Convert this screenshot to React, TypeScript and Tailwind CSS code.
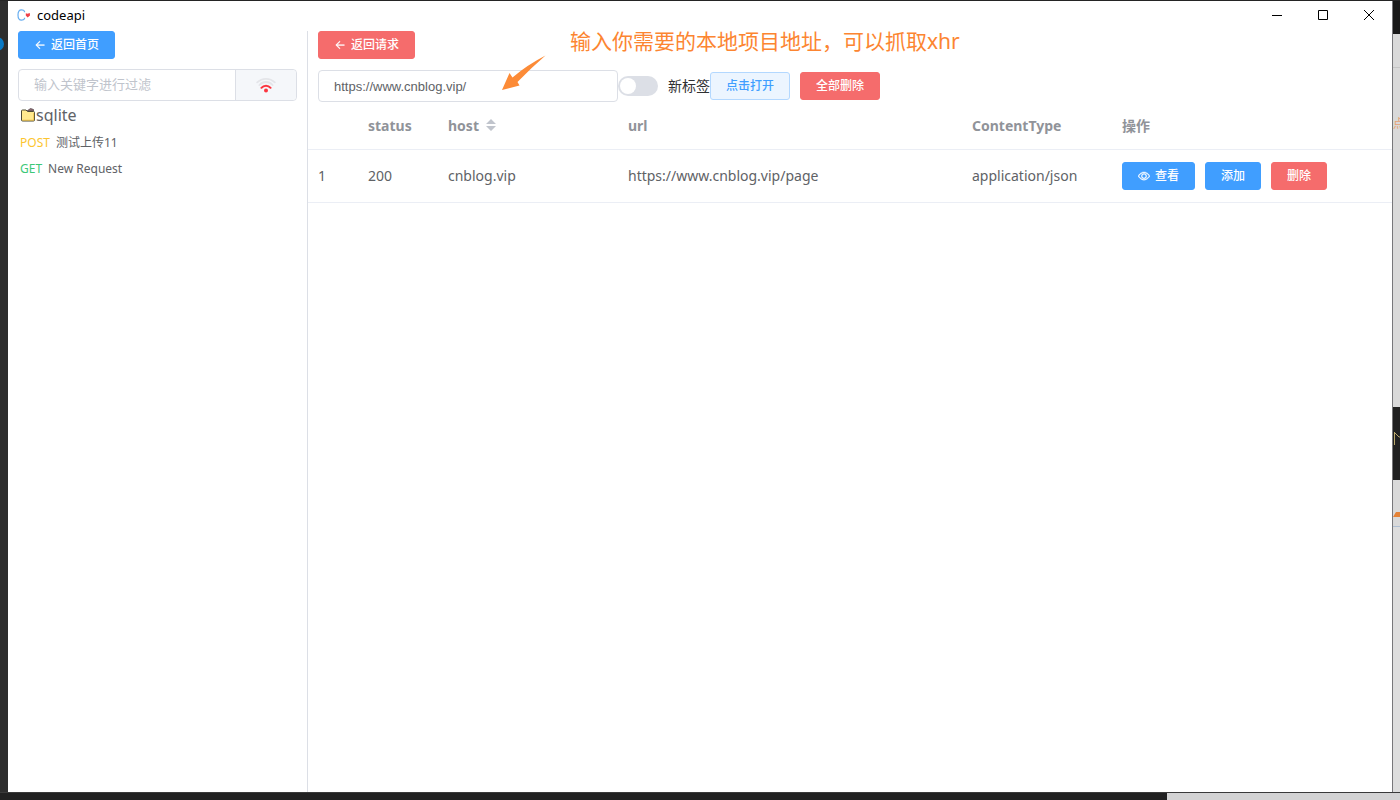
import { useState } from "react";
import type { ReactNode } from "react";

type Tone = "primary" | "danger" | "plain";

const tones: Record<Tone, string> = {
  primary: "border-[#409eff] bg-[#409eff] text-white",
  danger: "border-[#f56c6c] bg-[#f56c6c] text-white",
  plain: "border-[#b3d8ff] bg-[#ecf5ff] text-[#409eff]",
};

function Button({ tone, icon, children }: { tone: Tone; icon?: ReactNode; children: ReactNode }) {
  return (
    <button
      type="button"
      className={`flex h-7 shrink-0 items-center gap-[5px] rounded-[3px] border px-[15px] text-[12px] leading-3 font-medium ${tones[tone]}`}
    >
      {icon}
      <span>{children}</span>
    </button>
  );
}

function BackIcon() {
  return (
    <svg className="size-3" viewBox="0 0 1024 1024" fill="currentColor" stroke="currentColor" strokeWidth="40" aria-hidden="true">
      <path d="M224 480h640a32 32 0 1 1 0 64H224a32 32 0 0 1 0-64" />
      <path d="m237.248 512 265.408 265.344a32 32 0 0 1-45.312 45.312l-288-288a32 32 0 0 1 0-45.312l288-288a32 32 0 1 1 45.312 45.312z" />
    </svg>
  );
}

function ViewIcon() {
  return (
    <svg className="size-3" viewBox="0 0 1024 1024" fill="currentColor" stroke="currentColor" strokeWidth="30" aria-hidden="true">
      <path d="M512 160c320 0 512 352 512 352S832 864 512 864 0 512 0 512s192-352 512-352m0 64c-225.28 0-384.128 208.064-436.8 288 52.608 79.872 211.456 288 436.8 288 225.28 0 384.128-208.064 436.8-288-52.608-79.872-211.456-288-436.8-288m0 64a224 224 0 1 1 0 448 224 224 0 0 1 0-448m0 64a160.192 160.192 0 0 0-160 160c0 88.192 71.744 160 160 160s160-71.808 160-160-71.744-160-160-160" />
    </svg>
  );
}

function WifiIcon() {
  return (
    <svg className="h-4 w-5" viewBox="0 0 20 16" fill="none" strokeLinecap="round" aria-hidden="true">
      <path d="M1.200 5.400C6 .6 14 .6 18.800 5.400" stroke="#e4e5e9" strokeWidth="1.800" />
      <path d="M3.400 8c3.800-4 9.400-4 13.200 0" stroke="#e4e5e9" strokeWidth="1.800" />
      <path d="M5.400 10.800c2.400-2.900 6.800-2.900 9.200 0" stroke="#fb3640" strokeWidth="2" />
      <circle cx="10" cy="13.500" r="2" fill="#fb3640" />
    </svg>
  );
}

function FolderIcon() {
  return (
    <svg className="h-4 w-4" viewBox="0 0 16 16" aria-hidden="true">
      <path d="M7 4 10.500 1.500l3 1V4z" fill="#8b6a70" stroke="#5a4a50" strokeWidth=".8" />
      <path d="M1.500 4q0-1 1-1H6l1.500 1.500h6q1 0 1 1v7.500q0 1-1 1h-11q-1 0-1-1z" fill="#ffe98e" stroke="#4b4a35" />
      <path d="M2.500 13.200h11.200V6" fill="none" stroke="#eebd44" strokeWidth=".8" />
    </svg>
  );
}

function Logo() {
  return (
    <svg className="h-3 w-3.5" viewBox="0 0 14 12" fill="none" aria-hidden="true">
      <path d="M7.500 3.200V2.200Q6.800.8 4.500.8 1 .8 1 6t3.500 5.200q2.300 0 3-1.400v-1" stroke="#68aef0" strokeWidth="1.200" />
      <path d="M8.800 4.200 10.500 4.800l2.300-.8.200 2.400-2.400 2.200L8.800 6.600z" fill="#ee4048" />
    </svg>
  );
}

const requests = [
  { method: "POST", name: "测试上传11", color: "text-[#fcc530]" },
  { method: "GET", name: "New Request", color: "text-[#3cc878]" },
];

const captures = [{ id: 1, status: 200, host: "cnblog.vip", url: "https://www.cnblog.vip/page", type: "application/json" }];

function TitleBar() {
  return (
    <header className="flex h-[30px] items-start pl-[9px] text-black">
      <div className="flex h-7 items-center gap-[6px]">
        <Logo />
        <h1 className="text-[13px] leading-4">codeapi</h1>
      </div>
      <div className="ml-auto flex">
        <button type="button" aria-label="Minimize" className="flex h-7 w-[46px] items-center justify-center">
          <svg className="size-3" viewBox="0 0 12 12" stroke="currentColor" aria-hidden="true"><path d="M1 6.500h10" /></svg>
        </button>
        <button type="button" aria-label="Maximize" className="flex h-7 w-[46px] items-center justify-center">
          <svg className="size-3" viewBox="0 0 12 12" fill="none" stroke="currentColor" aria-hidden="true"><path d="M1.500 1.500h9v9h-9z" /></svg>
        </button>
        <button type="button" aria-label="Close" className="flex h-7 w-[46px] items-center justify-center">
          <svg className="size-3" viewBox="0 0 12 12" stroke="currentColor" aria-hidden="true"><path d="m1 1 10 10M11 1 1 11" /></svg>
        </button>
      </div>
    </header>
  );
}

function Sidebar() {
  return (
    <aside className="w-[300px] shrink-0 border-r border-[#dcdfe6] px-[10px]">
      <div className="flex">
        <Button tone="primary" icon={<BackIcon />}>返回首页</Button>
      </div>
      <div className="mt-[10px] flex h-8 rounded border border-[#dcdfe6]">
        <input
          aria-label="输入关键字进行过滤"
          placeholder="输入关键字进行过滤"
          className="min-w-0 flex-1 rounded-l px-[15px] text-[13px] outline-none placeholder:text-[#c0c4cc]"
        />
        <button type="button" aria-label="抓取" className="flex w-[61px] items-center justify-center rounded-r border-l border-[#dcdfe6] bg-[#f5f7fa]">
          <WifiIcon />
        </button>
      </div>
      <div className="mt-1 ml-[2px] flex h-5 items-center text-[16px] leading-5">
        <FolderIcon />
        <span>sqlite</span>
      </div>
      <ul className="mt-[5px] ml-[2px] text-[12px]">
        {requests.map((r) => (
          <li key={r.name} className="flex h-[26px] items-center gap-[6px]">
            <span className={r.color}>{r.method}</span>
            <span>{r.name}</span>
          </li>
        ))}
      </ul>
    </aside>
  );
}

function CaptureTable() {
  return (
    <table className="w-full table-fixed border-collapse text-left text-[14px] leading-[23px]">
      <colgroup>
        <col className="w-[50px]" />
        <col className="w-[80px]" />
        <col className="w-[180px]" />
        <col />
        <col className="w-[150px]" />
        <col className="w-[280px]" />
      </colgroup>
      <thead className="text-[#909399]">
        <tr className="h-[47px] border-b border-[#ebeef5] *:px-[10px] *:font-bold">
          <th />
          <th>status</th>
          <th>
            <div className="flex items-center gap-[7px]">
              host
              <svg className="h-3 w-[10px]" viewBox="0 0 10 12" fill="#c0c4cc" aria-hidden="true">
                <path d="M5 0 10 5H0zM0 7h10l-5 5z" />
              </svg>
            </div>
          </th>
          <th>url</th>
          <th>ContentType</th>
          <th>操作</th>
        </tr>
      </thead>
      <tbody>
        {captures.map((c) => (
          <tr key={c.id} className="h-[53px] border-b border-[#ebeef5] *:px-[10px]">
            <td>{c.id}</td>
            <td>{c.status}</td>
            <td>{c.host}</td>
            <td>{c.url}</td>
            <td>{c.type}</td>
            <td>
              <div className="flex gap-[10px]">
                <Button tone="primary" icon={<ViewIcon />}>查看</Button>
                <Button tone="primary">添加</Button>
                <Button tone="danger">删除</Button>
              </div>
            </td>
          </tr>
        ))}
      </tbody>
    </table>
  );
}

function CapturePanel() {
  const [address, setAddress] = useState("https://www.cnblog.vip/");
  return (
    <main className="relative min-w-0 flex-1">
      <div className="flex px-[10px]">
        <Button tone="danger" icon={<BackIcon />}>返回请求</Button>
      </div>
      <div className="mt-[11px] flex items-center px-[10px]">
        <input
          aria-label="本地项目地址"
          value={address}
          onChange={(e) => setAddress(e.target.value)}
          className="h-8 w-[300px] rounded border border-[#dcdfe6] px-[15px] font-['Liberation_Sans',sans-serif] text-[13px] outline-none"
        />
        <label className="flex items-center gap-[10px] text-[14px] leading-5 text-[#303133]">
          <input
            type="checkbox"
            role="switch"
            className="h-5 w-10 appearance-none rounded-full bg-[#dcdfe6] before:m-[2px] before:block before:size-4 before:rounded-full before:bg-white checked:bg-[#409eff] checked:before:ml-[22px]"
          />
          新标签
        </label>
        <div className="flex gap-[10px]">
          <Button tone="plain">点击打开</Button>
          <Button tone="danger">全部删除</Button>
        </div>
      </div>
      <CaptureTable />
      <p className="absolute -top-[6px] left-[262px] text-[21px] leading-8 text-[#fc8531]">
        输入你需要的本地项目地址，可以抓取xhr
      </p>
      <svg className="absolute top-6 left-[193px] h-9 w-[46px]" viewBox="0 0 46 36" fill="#fc8b37" aria-hidden="true">
        <path d="M1 35 8.500 18l3 4.500Q26 10 44.500.5 30 13 16.500 27l2 3.500z" />
      </svg>
    </main>
  );
}

function DesktopEdge() {
  return (
    <div className="flex w-2 shrink-0 flex-col overflow-hidden border-l border-[#77777a] bg-[#d9d9d9]" aria-hidden="true">
      <div className="h-[33px] bg-[#191919]" />
      <div className="h-[34px] border-b border-[#c5c5c5]" />
      <div className="h-[339px] pt-12 text-[12px] leading-4 text-[#e6a273]">点</div>
      <div className="h-[73px] bg-[#212121]">
        <svg className="mt-6 h-4 w-2" viewBox="0 0 8 16" fill="none" stroke="#bba96d"><path d="M1.500 2v12M1 1l5 5h2" /></svg>
      </div>
      <div className="h-[47px] border-b border-[#afbfd2]">
        <svg className="mt-[31px] h-2 w-2" viewBox="0 0 8 8" fill="#e48236"><path d="M0 6 3 1h5v5z" /></svg>
      </div>
      <div className="flex-1 bg-[#dddddd]" />
    </div>
  );
}

export default function App() {
  return (
    <div className="flex min-h-screen flex-col bg-[#242424] pt-px font-['Noto_Sans','Noto_Sans_CJK_SC',sans-serif] text-[#606266]">
      <div className="flex flex-1">
        <div className="w-2 shrink-0 overflow-hidden bg-[#2d2d2d] pt-9" aria-hidden="true">
          <div className="-ml-[10px] size-[14px] rounded-full bg-[#0878c4]" />
        </div>
        <div className="flex min-w-0 flex-1 flex-col bg-white">
          <TitleBar />
          <div className="flex flex-1">
            <Sidebar />
            <CapturePanel />
          </div>
        </div>
        <DesktopEdge />
      </div>
      <div className="flex h-2 border-t border-[#3a3a3a]" aria-hidden="true">
        <div className="flex-5 bg-[#212121]" />
        <div className="flex-1 bg-[#d3d3d4]" />
      </div>
    </div>
  );
}
